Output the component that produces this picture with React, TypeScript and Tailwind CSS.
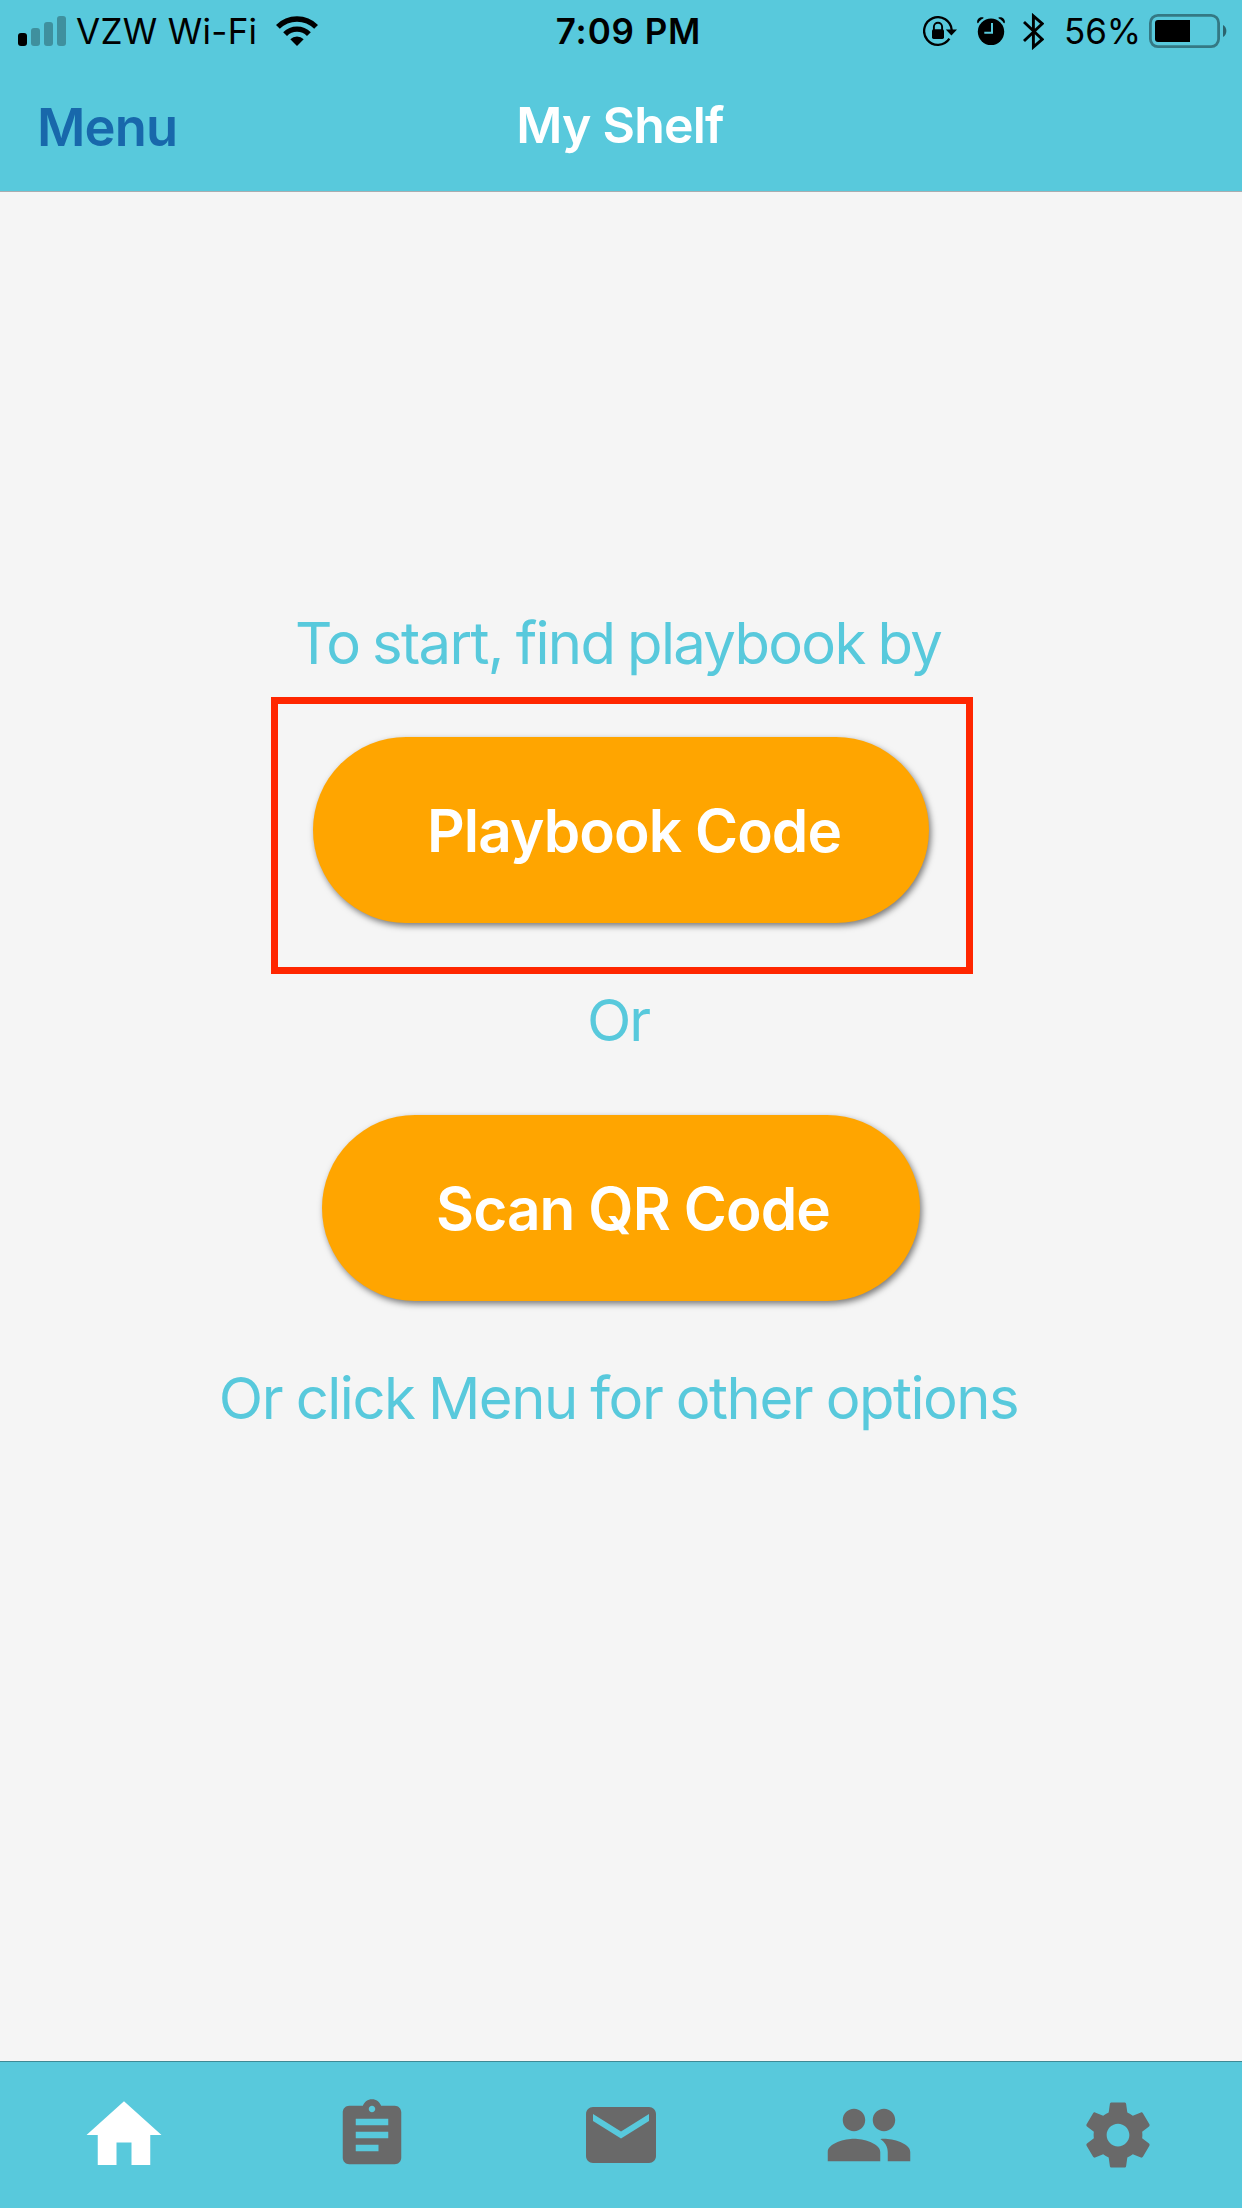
import type { ReactNode } from 'react';

function SignalIcon() {
  return (
    <svg className="h-[30px] w-12 shrink-0" viewBox="0 0 48 30">
      <rect x="0" y="17" width="9" height="13" rx="3" />
      <g opacity="0.28">
        <rect x="13" y="12" width="9" height="18" rx="3" />
        <rect x="26" y="6" width="9" height="24" rx="3" />
        <rect x="39" y="0" width="9" height="30" rx="3" />
      </g>
    </svg>
  );
}

function WifiIcon() {
  return (
    <svg className="h-[30px] w-[42px] shrink-0" viewBox="0 0 42 30">
      <path d="M1.9 10.9A27 27 0 0 1 40.1 10.9" fill="none" stroke="#000" strokeWidth="5.4" />
      <path d="M9.1 18.1A16.8 16.8 0 0 1 32.9 18.1" fill="none" stroke="#000" strokeWidth="5.4" />
      <path d="M14.3 23.3A9.5 9.5 0 0 1 27.7 23.3L21 30z" />
    </svg>
  );
}

function RotationLockIcon() {
  return (
    <svg className="mr-5 h-[30px] w-[34px] shrink-0" viewBox="0 0 34 30">
      <path d="M26.4 22.7A13.8 13.8 0 1 1 28.7 14" fill="none" stroke="#000" strokeWidth="2.3" />
      <path d="M22.8 13.4H34L28.4 19.6z" />
      <rect x="9" y="13.3" width="12" height="9.6" rx="1.6" />
      <path d="M10.9 14V10.8a4.1 4.1 0 0 1 8.2 0V14" fill="none" stroke="#000" strokeWidth="1.9" />
    </svg>
  );
}

function AlarmIcon() {
  return (
    <svg className="mr-[18px] h-7 w-7 shrink-0" viewBox="0 0 28 28">
      <circle cx="14" cy="14.8" r="13.2" />
      <path d="M0.4 6.2C-1 2.2 3 -0.8 6.6 0.5L6.2 1.6C4 2.6 2.4 4.2 1.4 6z" />
      <path d="M27.6 6.2C29 2.2 25 -0.8 21.4 0.5L21.8 1.6C24 2.6 25.6 4.2 26.6 6z" />
      <path d="M15 6V15.7H7.3" fill="none" stroke="#58c9dc" strokeWidth="2" />
    </svg>
  );
}

function BluetoothIcon() {
  return (
    <svg className="h-[37px] w-[21px] shrink-0" viewBox="0 0 21 37">
      <path d="M1 9L19.2 26.3L10.4 34V3L19.2 10.7L1 28" fill="none" stroke="#000" strokeWidth="2.9" />
    </svg>
  );
}

function BatteryIcon() {
  return (
    <svg className="h-[34px] w-[78px] shrink-0" viewBox="0 0 78 34">
      <rect x="1.4" y="1.4" width="68.2" height="31.2" rx="7.5" fill="none" stroke="#000" strokeOpacity="0.4" strokeWidth="2.8" />
      <path d="M9 6H41V28H9A3 3 0 0 1 6 25V9A3 3 0 0 1 9 6z" />
      <path d="M74 11A7 7 0 0 1 74 23z" opacity="0.5" />
    </svg>
  );
}

function StatusBar() {
  return (
    <div className="grid h-[63px] grid-cols-3 items-center text-[35px] leading-[62px] whitespace-nowrap text-black">
      <div className="flex items-center pb-[2px] pl-[18px]">
        <SignalIcon />
        <span className="ml-[10px] w-[200px] tracking-[0.3px]">VZW Wi-Fi</span>
        <WifiIcon />
      </div>
      <div className="pb-[2px] pl-[15px] text-center font-semibold tracking-[0.9px]">7:09 PM</div>
      <div className="flex items-center justify-end pr-[15px] pb-[2px]">
        <RotationLockIcon />
        <AlarmIcon />
        <BluetoothIcon />
        <span className="mr-[9px] ml-[20px] w-[76px] tracking-[-0.1px]">56%</span>
        <BatteryIcon />
      </div>
    </div>
  );
}

function Header() {
  return (
    <header className="flex h-48 flex-col border-b border-[#a9adb0] bg-[#58c9dc]">
      <StatusBar />
      <div className="grid flex-1 grid-cols-3 items-center">
        <button className="pl-[37px] text-left text-[52.5px] font-semibold tracking-[-0.9px] text-[#1868ab]">Menu</button>
        <h1 className="pr-[2px] pb-[4px] text-center text-[50px] font-semibold tracking-[-0.8px] text-white">My Shelf</h1>
      </div>
    </header>
  );
}

function PillButton({ className, children }: { className: string; children: ReactNode }) {
  return (
    <button
      className={`h-[186px] rounded-full bg-[#ffa500] pt-[2px] text-left text-[58.5px] font-semibold tracking-[-0.9px] whitespace-nowrap text-white shadow-[2px_3px_6px_rgba(0,0,0,0.5)] ${className}`}
    >
      {children}
    </button>
  );
}

function Hint({ className, children }: { className: string; children: ReactNode }) {
  return <p className={`text-[58px] leading-[80px] whitespace-nowrap text-[#58c9dc] ${className}`}>{children}</p>;
}

function Tab({ label, className, path }: { label: string; className: string; path: string }) {
  return (
    <button aria-label={label} className="flex items-center justify-center">
      <svg className={`fill-current ${className}`} viewBox="0 0 24 24">
        <path d={path} />
      </svg>
    </button>
  );
}

const tabs = [
  { label: 'Home', className: 'size-[90px] text-white', path: 'M10 20v-6h4v6h5v-8h3L12 3 2 12h3v8z' },
  {
    label: 'Assignments',
    className: 'mr-[2px] size-[78px] text-[#696969]',
    path: 'M19 3h-4.18C14.4 1.84 13.3 1 12 1c-1.3 0-2.4.84-2.82 2H5c-1.1 0-2 .9-2 2v14c0 1.1.9 2 2 2h14c1.1 0 2-.9 2-2V5c0-1.1-.9-2-2-2zm-7 0c.55 0 1 .45 1 1s-.45 1-1 1-1-.45-1-1 .45-1 1-1zm2 14H7v-2h7v2zm3-4H7v-2h10v2zm0-4H7V7h10v2z',
  },
  {
    label: 'Mail',
    className: 'size-[84px] text-[#696969]',
    path: 'M20 4H4c-1.1 0-1.99.9-1.99 2L2 18c0 1.1.9 2 2 2h16c1.1 0 2-.9 2-2V6c0-1.1-.9-2-2-2zm0 4l-8 5-8-5V6l8 5 8-5v2z',
  },
  {
    label: 'People',
    className: 'size-[90px] text-[#696969]',
    path: 'M16 11c1.66 0 2.99-1.34 2.99-3S17.66 5 16 5c-1.66 0-3 1.34-3 3s1.34 3 3 3zm-8 0c1.66 0 2.99-1.34 2.99-3S9.66 5 8 5C6.34 5 5 6.34 5 8s1.34 3 3 3zm0 2c-2.33 0-7 1.17-7 3.5V19h14v-2.5c0-2.33-4.67-3.5-7-3.5zm8 0c-.29 0-.62.02-.97.05 1.16.84 1.97 1.97 1.97 3.45V19h6v-2.5c0-2.33-4.67-3.5-7-3.5z',
  },
  {
    label: 'Settings',
    className: 'size-[78px] text-[#696969]',
    path: 'M19.43 12.98c.04-.32.07-.64.07-.98s-.03-.66-.07-.98l2.11-1.65c.19-.15.24-.42.12-.64l-2-3.46c-.12-.22-.39-.3-.61-.22l-2.49 1c-.52-.4-1.08-.73-1.69-.98l-.38-2.65C14.46 2.18 14.25 2 14 2h-4c-.25 0-.46.18-.49.42l-.38 2.65c-.61.25-1.17.59-1.69.98l-2.49-1c-.23-.09-.49 0-.61.22l-2 3.46c-.13.22-.07.49.12.64l2.11 1.65c-.04.32-.07.65-.07.98s.03.66.07.98l-2.11 1.65c-.19.15-.24.42-.12.64l2 3.46c.12.22.39.3.61.22l2.49-1c.52.4 1.08.73 1.69.98l.38 2.65c.03.24.24.42.49.42h4c.25 0 .46-.18.49-.42l.38-2.65c.61-.25 1.17-.59 1.69-.98l2.49 1c.23.09.49 0 .61-.22l2-3.46c.12-.22.07-.49-.12-.64l-2.11-1.65zM12 15.5c-1.93 0-3.5-1.57-3.5-3.5s1.57-3.5 3.5-3.5 3.5 1.57 3.5 3.5-1.57 3.5-3.5 3.5z',
  },
];

export default function App() {
  return (
    <div className="flex h-[2208px] w-[1242px] flex-col overflow-hidden bg-[#f5f5f5] font-['Inter',sans-serif]">
      <Header />
      <main className="flex flex-1 flex-col items-center pt-[411px]">
        <Hint className="pr-[6px] tracking-[-1.7px] [word-spacing:-1.7px]">To start, find playbook by</Hint>
        <div className="mt-[14px] ml-[2px] h-[277px] w-[702px] border-[7px] border-[#ff2600] pt-[33px] pl-[35px]">
          <PillButton className="w-[616px] pl-[114px]">Playbook Code</PillButton>
        </div>
        <Hint className="mt-[6px] pr-[6px] tracking-[-2px]">Or</Hint>
        <PillButton className="mt-[55px] w-[598px] pl-[114px]">Scan QR Code</PillButton>
        <Hint className="mt-[57px] pr-[5px] tracking-[-1.5px] [word-spacing:-1.2px]">Or click Menu for other options</Hint>
      </main>
      <nav className="grid h-[147px] grid-cols-5 border-t border-[#3d8995] bg-[#58c9dc]">
        {tabs.map((tab) => (
          <Tab key={tab.label} {...tab} />
        ))}
      </nav>
    </div>
  );
}
